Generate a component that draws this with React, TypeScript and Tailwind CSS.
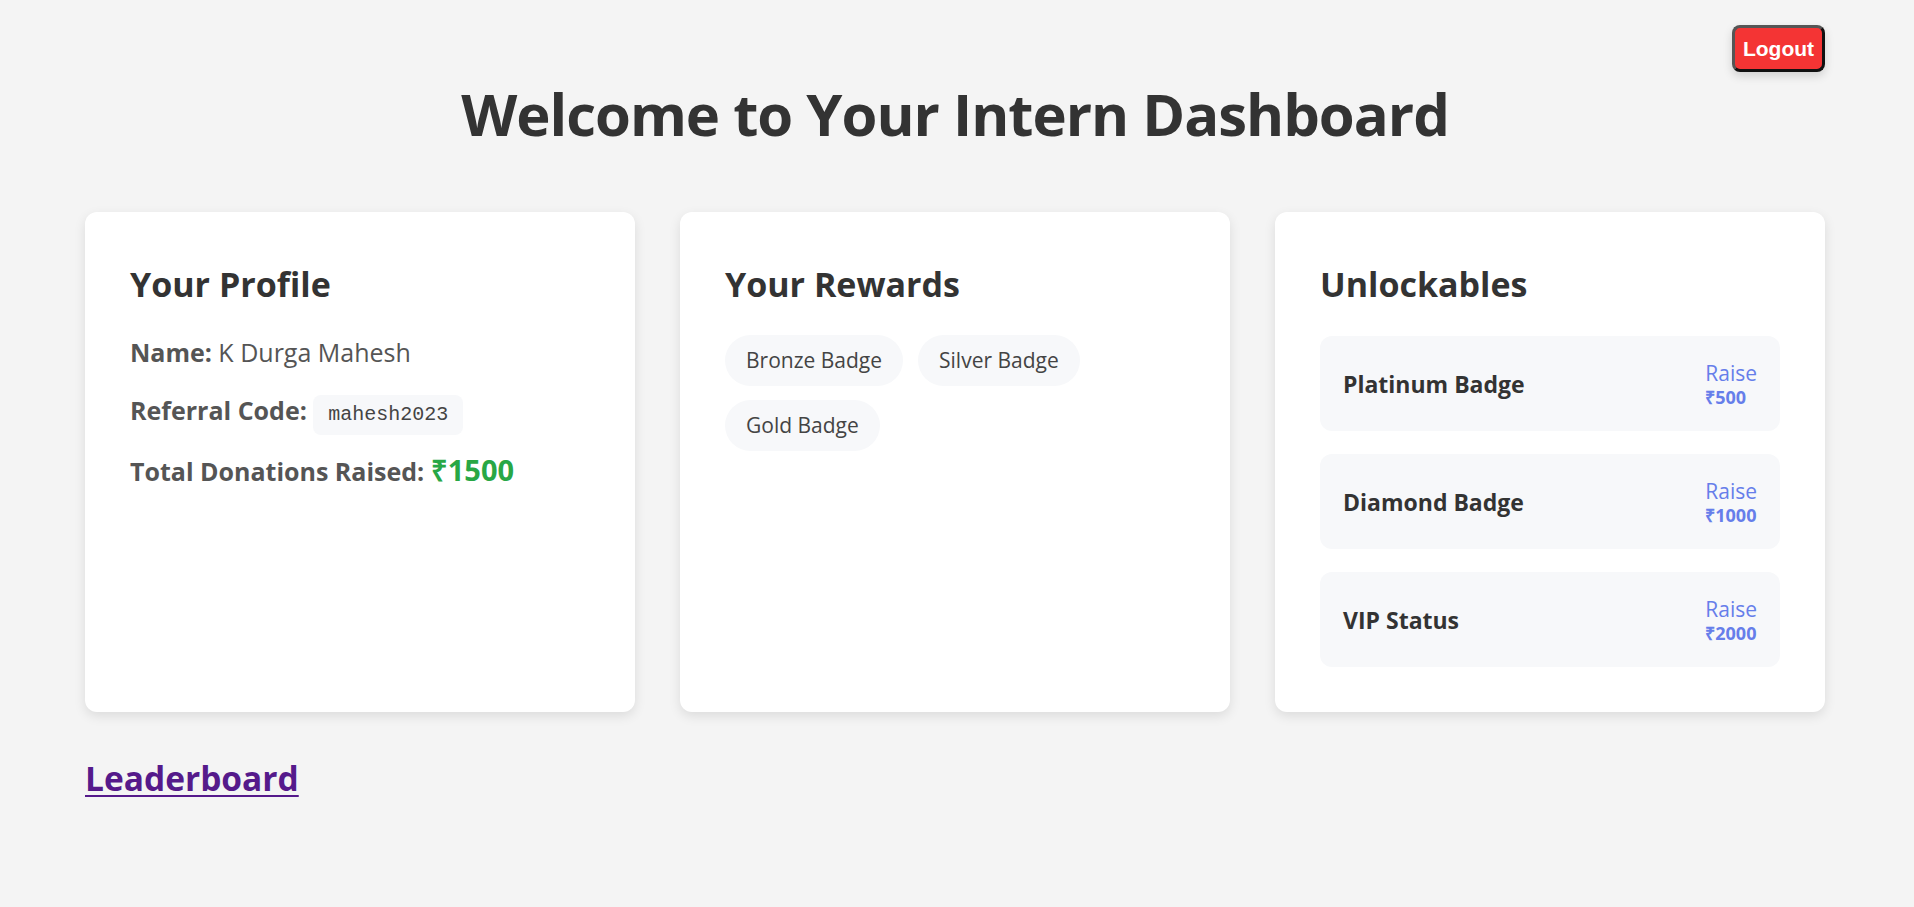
import React from 'react';

const rewards = ['Bronze Badge', 'Silver Badge', 'Gold Badge'];

const unlockables = [
  { name: 'Platinum Badge', amount: '₹500' },
  { name: 'Diamond Badge', amount: '₹1000' },
  { name: 'VIP Status', amount: '₹2000' },
];

export default function App() {
  return (
    <div className="min-h-screen w-full bg-[#f4f4f4] font-['Open_Sans',sans-serif] text-[#333]">
      <div className="pl-[85px] pr-[89px]">
        {/* Header */}
        <div className="flex justify-end pt-[25px]">
          <button className="h-[47px] w-[93px] rounded-[8px] border-[3px] border-t-[#555] border-l-[#555] border-r-[#111] border-b-[#111] bg-[#f43434] font-['Liberation_Sans',Arial,sans-serif] text-[21px] font-bold text-white shadow-[0_4px_10px_rgba(0,0,0,0.15)]">
            Logout
          </button>
        </div>
        <h1 className="mt-[7px] text-center text-[58px] font-bold leading-[1.2] tracking-[-1px] text-[#333]">
          Welcome to Your Intern Dashboard
        </h1>

        {/* Cards */}
        <div className="mt-[63px] grid grid-cols-3 gap-[45px]">
          {/* Profile */}
          <div className="rounded-[12px] bg-white p-[45px] shadow-[0_4px_12px_rgba(0,0,0,0.1)]">
            <h2 className="mt-[7px] text-[34px] font-bold leading-[1.2] text-[#333]">Your Profile</h2>
            <p className="mt-[30px] text-[25px] leading-[36px] text-[#555]">
              <span className="font-bold">Name:</span> K Durga Mahesh
            </p>
            <p className="mt-[22px] text-[25px] leading-[36px] text-[#555]">
              <span className="font-bold">Referral Code:</span>{' '}
              <code className="inline-block rounded-[8px] bg-[#f7f8fa] px-[15px] py-[8px] font-['Liberation_Mono',monospace] text-[20px] leading-[24px] text-[#444]">
                mahesh2023
              </code>
            </p>
            <p className="mt-[18px] text-[25px] leading-[36px] text-[#555]">
              <span className="font-bold">Total Donations Raised:</span>{' '}
              <span className="text-[29px] font-bold leading-none text-[#28a745]">₹1500</span>
            </p>
          </div>

          {/* Rewards */}
          <div className="rounded-[12px] bg-white p-[45px] shadow-[0_4px_12px_rgba(0,0,0,0.1)]">
            <h2 className="mt-[7px] text-[34px] font-bold leading-[1.2] text-[#333]">Your Rewards</h2>
            <div className="mt-[31px] flex flex-wrap gap-x-[15px] gap-y-[14px]">
              {rewards.map((r) => (
                <span
                  key={r}
                  className="flex h-[51px] items-center rounded-full bg-[#f7f8fa] px-[21px] text-[21px] text-[#444]"
                >
                  {r}
                </span>
              ))}
            </div>
          </div>

          {/* Unlockables */}
          <div className="rounded-[12px] bg-white p-[45px] shadow-[0_4px_12px_rgba(0,0,0,0.1)]">
            <h2 className="mt-[7px] text-[34px] font-bold leading-[1.2] text-[#333]">Unlockables</h2>
            <div className="mt-[32px] flex flex-col gap-[23px]">
              {unlockables.map((u) => (
                <div
                  key={u.name}
                  className="flex h-[95px] items-center justify-between rounded-[12px] bg-[#f7f8fa] px-[23px]"
                >
                  <span className="text-[23px] font-bold text-[#333]">{u.name}</span>
                  <div className="flex flex-col items-start">
                    <span className="text-[21px] leading-[26px] text-[#667eea]">Raise</span>
                    <span className="text-[18px] font-bold leading-[22px] text-[#667eea]">{u.amount}</span>
                  </div>
                </div>
              ))}
            </div>
          </div>
        </div>

        {/* Footer link */}
        <a href="#" className="mt-[46px] inline-block text-[33.5px] font-bold leading-[1.2] text-[#551a8b] underline decoration-2 underline-offset-[4px]">
          Leaderboard
        </a>
      </div>
    </div>
  );
}
